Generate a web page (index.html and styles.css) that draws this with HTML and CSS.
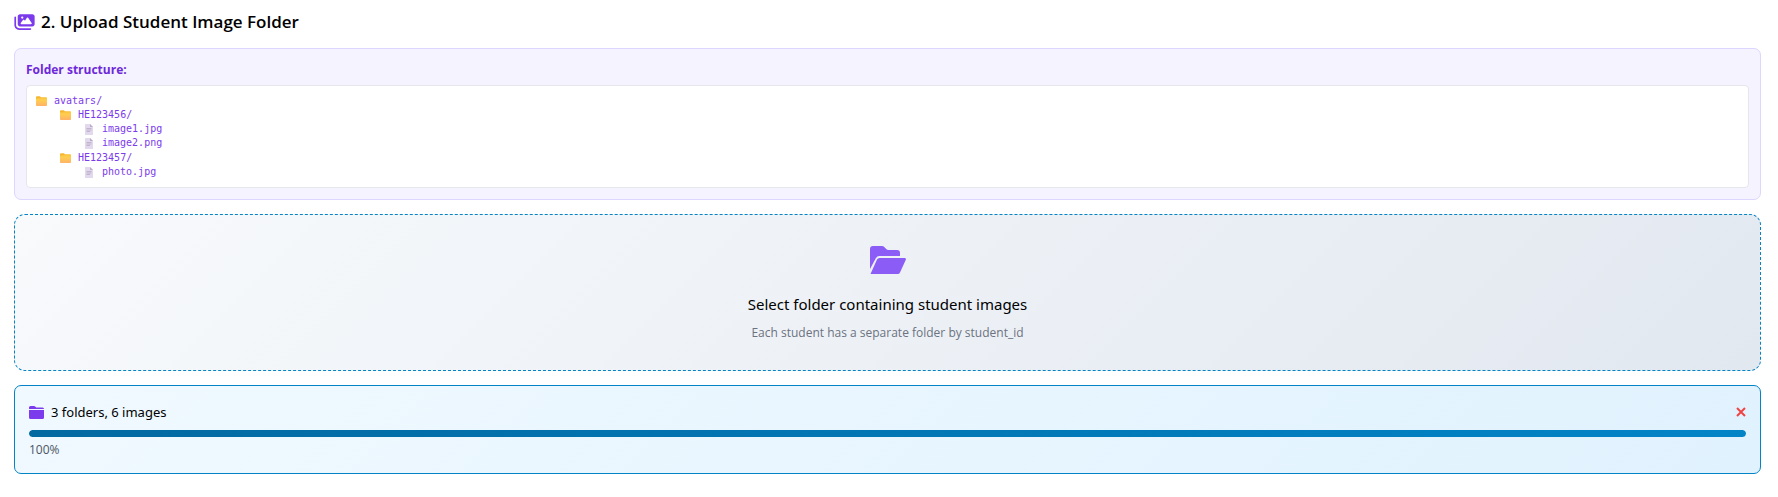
FILE: index.html
```html
<!DOCTYPE html>
<html lang="en">
<head>
<meta charset="utf-8">
<meta name="viewport" content="width=device-width, initial-scale=1">
<title>Upload Student Image Folder</title>
<link rel="stylesheet" href="styles.css">
</head>
<body>
<svg class="sprite" aria-hidden="true">
  <linearGradient id="folder-fill" x1="0" y1="0" x2="0" y2="1">
    <stop offset="0" stop-color="#f9c23c"/><stop offset=".3" stop-color="#ffce4f"/><stop offset="1" stop-color="#ffb367"/>
  </linearGradient>
  <symbol id="folder" viewBox="0 0 11 10">
    <path fill="#f5b731" d="M0 1.2Q0 .2 1 .2h2.600q.5 0 .9.500l.6.700H10q1 0 1 1V5H0z"/>
    <path fill="url(#folder-fill)" d="M0 2.800q0-.6.600-.6h3l1-.7H10.300q.7 0 .7.700V9.200q0 .8-.8.800H.8Q0 10 0 9.200z"/>
  </symbol>
  <symbol id="file" viewBox="0 0 8 11">
    <path fill="#e3d9ee" d="M.6 0H5l3 3v7.400q0 .6-.6.600H.6Q0 11 0 10.400V.6Q0 0 .6 0z"/>
    <path fill="#b9adc6" d="M5 0l3 3H5.500Q5 3 5 2.500z"/>
    <path fill="#c0b5cc" d="M1.500 4h5v1h-5zM1.500 5.500h5v1h-5zM1.500 7h3.500v1H1.500z"/>
  </symbol>
</svg>
<main class="upload">
  <h2 class="title">
    <svg class="title-icon" viewBox="0 0 576 512" aria-hidden="true"><path fill="currentColor" d="M160 32c-35.300 0-64 28.700-64 64V320c0 35.300 28.700 64 64 64H512c35.300 0 64-28.700 64-64V96c0-35.300-28.700-64-64-64H160zM396 138.700l96 144c4.900 7.400 5.400 16.800 1.200 24.600S480.900 320 472 320H328 280 200c-9.200 0-17.600-5.300-21.600-13.600s-2.900-18.200 2.900-25.400l64-80c4.600-5.700 11.400-9 18.700-9s14.200 3.300 18.700 9l17.300 21.600 56-84C360.500 132 368 128 376 128s15.500 4 20 10.700zM192 128a32 32 0 1 1 64 0 32 32 0 1 1-64 0zM48 120c0-13.300-10.700-24-24-24S0 106.700 0 120V344c0 75.100 60.900 136 136 136H456c13.300 0 24-10.700 24-24s-10.700-24-24-24H136c-48.600 0-88-39.400-88-88V120z"/></svg>
    2. Upload Student Image Folder
  </h2>

  <section class="structure">
    <h3 class="structure-title">Folder structure:</h3>
    <div class="tree">
      <div class="node"><svg class="folder-icon"><use href="#folder"/></svg>avatars/</div>
      <ul class="branch">
        <li class="group">
          <div class="node"><svg class="folder-icon"><use href="#folder"/></svg>HE123456/</div>
          <ul class="branch">
            <li class="node"><svg class="file-icon"><use href="#file"/></svg>image1.jpg</li>
            <li class="node"><svg class="file-icon"><use href="#file"/></svg>image2.png</li>
          </ul>
        </li>
        <li class="group">
          <div class="node"><svg class="folder-icon"><use href="#folder"/></svg>HE123457/</div>
          <ul class="branch">
            <li class="node"><svg class="file-icon"><use href="#file"/></svg>photo.jpg</li>
          </ul>
        </li>
      </ul>
    </div>
  </section>

  <button class="dropzone" type="button">
    <svg class="dropzone-icon" viewBox="0 0 36 28" aria-hidden="true"><path fill="currentColor" d="M3 0h9q1.200 0 2 .8L16.500 3.300q.7.700 1.700.7H27q3 0 3 3v3H9.500Q7 10 5.800 12.200L0 23V3Q0 0 3 0zM9.500 12H34.500q2 0 1.200 2L30 26.500Q29.300 28 27.800 28H.5L7 13.500Q7.700 12 9.500 12z"/></svg>
    <span class="dropzone-title">Select folder containing student images</span>
    <span class="dropzone-hint">Each student has a separate folder by student_id</span>
  </button>

  <section class="result">
    <div class="result-head">
      <svg class="result-icon" viewBox="0 0 15 13" aria-hidden="true"><path fill="currentColor" d="M0 3V1.500Q0 0 1.500 0H5q.7 0 1.200.5L7.200 1.500H13.500Q15 1.500 15 3zM0 4H15v7.500Q15 13 13.500 13h-12Q0 13 0 11.500z"/></svg>
      <span class="result-text">3 folders, 6 images</span>
      <button class="remove" type="button" aria-label="Remove">
        <svg class="remove-icon" viewBox="0 0 10 10" aria-hidden="true"><path d="M1 1l8 8M9 1L1 9"/></svg>
      </button>
    </div>
    <div class="track" role="progressbar" aria-label="Upload progress" aria-valuenow="100" aria-valuemin="0" aria-valuemax="100"><div class="fill" style="width:100%"></div></div>
    <div class="percent">100%</div>
  </section>
</main>
</body>
</html>
```

FILE: styles.css
```css
* {
  box-sizing: border-box;
}

body {
  margin: 0;
  background: #fff;
  color: #000;
  font-family: "Open Sans", "Noto Sans", sans-serif;
}

.sprite {
  position: absolute;
  width: 0;
  height: 0;
}

.upload {
  display: flex;
  flex-direction: column;
  gap: 14px;
  padding: 10px 17px 16px 14px;
}

.title {
  display: flex;
  align-items: center;
  gap: 6px;
  margin: 0;
  font-size: 17px;
  font-weight: 600;
  line-height: 24px;
}

.title-icon {
  width: 21px;
  height: 18px;
  color: #7c3aed;
}

.structure {
  padding: 11px;
  border: 1px solid #ddd6fe;
  border-radius: 7px;
  background: #f5f3ff;
}

.structure-title {
  margin: 0 0 5px;
  color: #6d28d9;
  font-size: 12px;
  font-weight: 700;
  line-height: 20px;
}

.tree {
  padding: 8px 9px;
  border: 1px solid #e5e7eb;
  border-radius: 4px;
  background: #fff;
  color: #7c3aed;
  font-family: "DejaVu Sans Mono", monospace;
  font-size: 10px;
  line-height: 14px;
}

.branch {
  margin: 0;
  padding: 0 0 0 24px;
  list-style: none;
}

.group + .group {
  margin-top: 1px;
}

.node {
  display: flex;
  align-items: center;
  gap: 7px;
}

.folder-icon {
  width: 11px;
  height: 10px;
}

.file-icon {
  width: 8px;
  height: 11px;
  margin: 0 2px 0 1px;
}

.dropzone {
  display: flex;
  flex-direction: column;
  align-items: center;
  padding: 31px 20px 26px;
  border: 1px dashed #0284c7;
  border-radius: 11px;
  background: linear-gradient(135deg, #f8fafc, #e2e8f0);
  color: #000;
  font: inherit;
  cursor: pointer;
}

.dropzone-icon {
  width: 36px;
  height: 28px;
  margin-bottom: 18px;
  color: #8b5cf6;
}

.dropzone-title {
  margin-bottom: 6px;
  font-family: "Noto Sans", sans-serif;
  font-size: 15px;
  line-height: 24px;
}

.dropzone-hint {
  color: #6b7280;
  font-size: 12px;
  line-height: 22px;
}

.result {
  padding: 14px;
  border: 1px solid #0284c7;
  border-radius: 7px;
  background: linear-gradient(135deg, #f0f9ff, #e0f2fe);
}

.result-head {
  display: flex;
  align-items: center;
  gap: 7px;
  margin-bottom: 6px;
  font-family: "Noto Sans", sans-serif;
  font-size: 13px;
  line-height: 24px;
}

.result-icon {
  width: 15px;
  height: 13px;
  color: #7c3aed;
}

.remove {
  display: flex;
  margin-left: auto;
  padding: 0;
  border: 0;
  background: none;
  color: #ef4444;
  cursor: pointer;
}

.remove-icon {
  width: 10px;
  height: 10px;
  fill: none;
  stroke: currentColor;
  stroke-width: 2;
}

.track {
  height: 7px;
  overflow: hidden;
  border-radius: 4px;
  background: #e5e7eb;
}

.fill {
  height: 100%;
  border-radius: 4px;
  background: linear-gradient(90deg, #0369a1, #0284c7);
}

.percent {
  margin-top: 3px;
  color: #4b5563;
  font-size: 12px;
  line-height: 19px;
}
```
